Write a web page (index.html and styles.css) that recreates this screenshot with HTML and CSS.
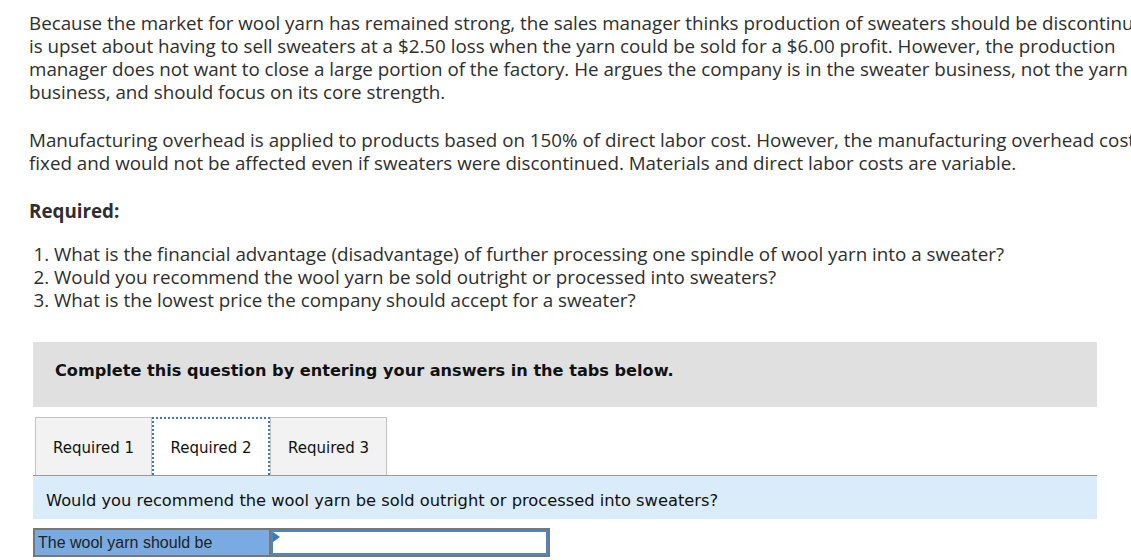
FILE: index.html
```html
<!DOCTYPE html>
<html>
<head>
<meta charset="utf-8">
<link rel="stylesheet" href="styles.css">
</head>
<body>
<div class="page">
  <div class="question">
    <p class="para">
      <span class="line">Because the market for wool yarn has remained strong, the sales manager thinks production of sweaters should be discontinued. He</span>
      <span class="line">is upset about having to sell sweaters at a $2.50 loss when the yarn could be sold for a $6.00 profit. However, the production</span>
      <span class="line">manager does not want to close a large portion of the factory. He argues the company is in the sweater business, not the yarn</span>
      <span class="line">business, and should focus on its core strength.</span>
    </p>
    <p class="para">
      <span class="line">Manufacturing overhead is applied to products based on 150% of direct labor cost. However, the manufacturing overhead costs are</span>
      <span class="line">fixed and would not be affected even if sweaters were discontinued. Materials and direct labor costs are variable.</span>
    </p>
    <p class="required">Required:</p>
    <ol class="reqlist">
      <li>What is the financial advantage (disadvantage) of further processing one spindle of wool yarn into a sweater?</li>
      <li>Would you recommend the wool yarn be sold outright or processed into sweaters?</li>
      <li>What is the lowest price the company should accept for a sweater?</li>
    </ol>
  </div>

  <div class="answer">
    <div class="banner">Complete this question by entering your answers in the tabs below.</div>
    <div class="tabs">
      <div class="tab">Required 1</div>
      <div class="tab active">Required 2</div>
      <div class="tab">Required 3</div>
    </div>
    <div class="prompt">Would you recommend the wool yarn be sold outright or processed into sweaters?</div>
    <div class="row">
      <div class="label">The wool yarn should be</div>
      <div class="input"><span class="marker"></span></div>
    </div>
  </div>
</div>
</body>
</html>
```

FILE: styles.css
```css
html, body {
  margin: 0;
  padding: 0;
  background: #ffffff;
  overflow: hidden;
}

.page {
  width: 1131px;
  height: 560px;
  overflow: hidden;
}

.question {
  padding: 12px 0 0 29px;
  font-family: "Open Sans", Lato, sans-serif;
  font-size: 18.8px;
  line-height: 23px;
  color: #2e2e2e;
  font-variant-ligatures: none;
}

.para {
  margin: 0 0 25px 0;
  white-space: nowrap;
}

.line {
  display: block;
}

.required {
  margin: 0 0 20px 0;
  font-weight: bold;
}

.reqlist {
  margin: 0;
  padding-left: 25px;
}

.answer {
  margin: 30px 0 0 33px;
  width: 1064px;
  font-family: "DejaVu Sans", Verdana, sans-serif;
  color: #111;
}

.banner {
  background: #e0e0e0;
  height: 65px;
  box-sizing: border-box;
  padding: 19px 0 0 22px;
  font-size: 16.15px;
  line-height: 20px;
  font-weight: bold;
}

.tabs {
  margin-top: 10px;
  display: flex;
  padding-left: 2px;
  border-bottom: 1px solid #999999;
  height: 58px;
}

.tab {
  width: 117px;
  box-sizing: border-box;
  background: #f2f2f2;
  border: 1px solid #c4c4c4;
  border-bottom: none;
  font-size: 15px;
  display: flex;
  align-items: center;
  justify-content: center;
  padding-top: 3px;
  color: #111;
}

.tab.active {
  width: 118px;
  background: #ffffff;
  border: 2px dotted #3f74b5;
  border-bottom: none;
  padding-top: 1px;
}

.prompt {
  background: #daecf9;
  height: 43px;
  box-sizing: border-box;
  padding: 15px 0 0 13px;
  font-size: 16.3px;
  line-height: 20px;
}

.row {
  margin-top: 9px;
  display: flex;
  height: 29px;
}

.label {
  width: 236px;
  box-sizing: border-box;
  background: #79abe2;
  border: 2px solid #777777;
  border-right: none;
  font-family: "Liberation Sans", Arial, sans-serif;
  font-size: 16px;
  line-height: 25px;
  padding-left: 3px;
  color: #222;
}

.input {
  position: relative;
  width: 281px;
  box-sizing: border-box;
  background: #ffffff;
  border: 2px solid #777777;
  box-shadow: inset 0 0 0 2px #4a86c8;
}

.marker {
  position: absolute;
  left: 2px;
  top: 2px;
  width: 0;
  height: 0;
  border-top: 5px solid transparent;
  border-bottom: 5px solid transparent;
  border-left: 7px solid #3a78c0;
}
```
